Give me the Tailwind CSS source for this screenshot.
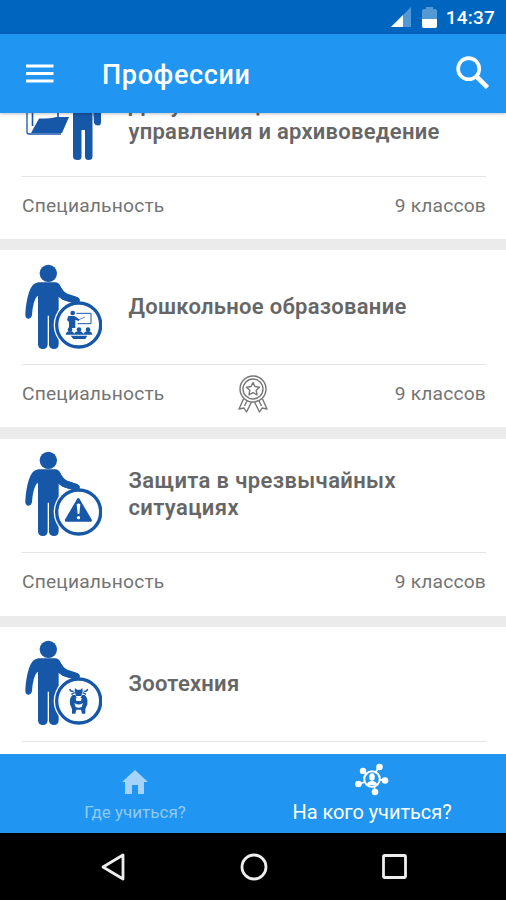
<!DOCTYPE html>
<html lang="ru">
<head>
<meta charset="utf-8">
<title>Профессии</title>
<script src="https://cdn.jsdelivr.net/npm/@tailwindcss/browser@4"></script>
</head>
<body class="w-[506px] h-[900px] overflow-hidden flex flex-col bg-[#ebebeb] font-['Roboto','Noto_Sans',sans-serif]">
<svg class="hidden">
  <defs>
    <g id="person">
      <path d="M85 94H136Q146 94 151 105Q158 121 171 128L203 139Q213 146 208 155Q202 160 190 157L158 146L146 137V280Q146 294 132 294Q119 294 117 283V194H113V280Q113 294 99 294Q84 294 84 280V136H81Q69 150 66 192Q64 203 54 203Q45 201 46 188Q48 151 57 124Q66 96 85 94Z" fill="#1757a8"/>
      <circle cx="206" cy="222" r="75" fill="white"/>
      <circle cx="206" cy="222" r="66" fill="white" stroke="#1757a8" stroke-width="10"/>
      <path d="M150 104Q158 121 171 128L203 139Q213 146 208 155Q202 160 190 157L158 146L146 137Z" fill="#1757a8"/>
      <circle cx="115" cy="67" r="26" fill="#1757a8"/>
    </g>
  </defs>
</svg>

<div class="h-[34px] shrink-0 bg-[#0065be] flex items-center justify-end pr-[11px] text-white">
  <svg class="w-[20px] h-[20px] mr-[11px]" viewBox="0 0 20 20"><path d="M20 0V20H0Z" fill="#5299d6"/><path d="M12 8V20H0Z" fill="white"/></svg>
  <svg class="w-[15px] h-[21px] mr-[9px]" viewBox="0 0 15 21"><path d="M4 0H11V2H13Q15 2 15 4V19Q15 21 13 21H2Q0 21 0 19V4Q0 2 2 2H4Z" fill="#5299d6"/><path d="M0 12H15V19Q15 21 13 21H2Q0 21 0 19Z" fill="white"/></svg>
  <span class="text-[19px] leading-[34px] font-medium pt-[2px] tracking-[0.2px]">14:37</span>
</div>

<header class="h-[79px] shrink-0 bg-[#2095f2] flex items-center pl-[26px] pr-[17px] relative shadow-[0_1px_3px_rgba(0,0,0,0.25)] text-white">
  <svg class="w-[28px] h-[20px]" viewBox="0 0 28 20"><path d="M0 2H27.500M0 9.500H27.500M0 17H27.500" stroke="white" stroke-width="3"/></svg>
  <h1 class="ml-[48px] pt-[3px] text-[27px] leading-[32px] font-medium tracking-[0.650px]">Профессии</h1>
  <svg class="w-[33px] h-[33px] ml-auto -mt-[2px]" viewBox="0 0 33 33" fill="none" stroke="white"><circle cx="12.700" cy="12.700" r="10.600" stroke-width="3.600"/><path d="M20.500 20.500L31.500 31.500" stroke-width="4.600"/></svg>
</header>

<main class="flex-1 min-h-0 overflow-hidden">
  <div class="-mt-[51.500px] flex flex-col gap-[11.500px]">
    <article class="h-[177px] shrink-0 bg-white px-[20px] text-[#666]">
      <div class="h-[115px] pb-[2px] flex items-center border-b border-[#e4e4e4] ml-[2px]">
        <svg class="w-[77px] h-[86px] ml-[3px]" viewBox="0 0 77 86" fill="#1757a8">
          <path d="M48 20H67.500V81.500Q67.500 85 63.500 85Q60 85 60 81.500V55H56.500V81.500Q56.500 85 53 85Q48 85 48 81.500Z"/>
          <path d="M67 20H70Q76 22 76 34V47Q76 50.500 73 50.500Q70 50.500 69 48Z"/>
          <path d="M2 36V57Q2 59 4 59H36" fill="none" stroke="#1757a8" stroke-width="1.300"/>
          <path d="M14 43.500Q26 43.500 31 42H44L37 58H6Z"/>
          <path d="M7.500 36V51M33 36V43" stroke="#1757a8" stroke-width="1.600"/>
        </svg>
        <h2 class="ml-[26.500px] flex-1 font-semibold text-[22px] leading-[27px] tracking-[0.250px] whitespace-nowrap">Документационное обеспечение<br>управления и архивоведение</h2>
      </div>
      <div class="h-[59px] flex items-center justify-between pl-[2px] text-[19.200px] tracking-[0.200px] text-[#747474]"><span>Специальность</span><span>9 классов</span></div>
    </article>

    <article class="h-[177px] shrink-0 bg-white px-[20px] text-[#666]">
      <div class="h-[115px] pb-[1px] flex items-center border-b border-[#e4e4e4] ml-[2px]">
        <svg class="w-[77px] h-[86px] ml-[3px]" viewBox="45 39 231 258">
          <use href="#person"/>
          <g fill="#1757a8">
            <circle cx="188" cy="186" r="7"/><path d="M175 195H193L208 205L206 210L196 206V231H177V213L171 207Z"/>
            <path d="M199 187H243V218H203" fill="none" stroke="#1757a8" stroke-width="3"/><path d="M204 207L225 198" stroke="#1757a8" stroke-width="2"/>
            <circle cx="180" cy="236" r="7"/><circle cx="207" cy="236" r="7"/><circle cx="234" cy="236" r="7"/>
            <path d="M167 251Q169 241 180 241Q190 241 193 248Q196 241 207 241Q217 241 220 248Q224 241 234 241Q245 241 247 251Z"/><path d="M182 254H232L226 264H190Z"/>
          </g>
        </svg>
        <h2 class="ml-[26.500px] flex-1 font-semibold text-[22px] leading-[27px] tracking-[0.280px]">Дошкольное образование</h2>
      </div>
      <div class="h-[58px] flex items-center justify-between pl-[2px] text-[19.200px] tracking-[0.200px] text-[#747474]"><span>Специальность</span>
        <svg class="w-[30px] h-[38px] mr-[54px] -mt-[1px]" viewBox="0 0 30 38" fill="none" stroke="#777" stroke-width="1.400" stroke-linejoin="round"><circle cx="15" cy="14" r="13"/><circle cx="15" cy="14" r="10"/><path d="M15 7.500L17 11.500L21.500 12.200L18.200 15.300L19 19.800L15 17.700L11 19.800L11.800 15.300L8.500 12.200L13 11.500Z"/><path d="M5.500 24L1 34L6 33L8.500 37L13.500 27M24.500 24L29 34L24 33L21.500 37L16.500 27M9 26L6.500 31M21 26L23.500 31"/></svg>
        <span>9 классов</span></div>
    </article>

    <article class="h-[177px] shrink-0 bg-white px-[20px] text-[#666]">
      <div class="h-[114.500px] pb-[2px] flex items-center border-b border-[#e4e4e4] ml-[2px]">
        <svg class="w-[77px] h-[86px] ml-[3px]" viewBox="45 39 231 258">
          <use href="#person"/>
          <path d="M205 185L241 247H169Z" fill="#1757a8" stroke="#1757a8" stroke-width="9" stroke-linejoin="round"/>
          <path d="M200 199Q205 194 211 199L208 228H203Z" fill="white"/><circle cx="205.500" cy="239" r="5" fill="white"/>
        </svg>
        <h2 class="ml-[26.500px] flex-1 font-semibold text-[22px] leading-[27px] tracking-[0.380px]">Защита в чрезвычайных ситуациях</h2>
      </div>
      <div class="h-[59px] flex items-center justify-between pl-[2px] text-[19.200px] tracking-[0.200px] text-[#747474]"><span>Специальность</span><span>9 классов</span></div>
    </article>

    <article class="h-[177px] shrink-0 bg-white px-[20px] text-[#666]">
      <div class="h-[114.500px] pb-[1px] flex items-center border-b border-[#e4e4e4] ml-[2px]">
        <svg class="w-[77px] h-[86px] ml-[3px]" viewBox="45 39 231 258">
          <use href="#person"/>
          <g fill="#1757a8">
            <path d="M195 183L201 188H211L217 183L218 192L214 207H198L194 192Z"/>
            <path d="M179 186Q181 194 191 193M233 186Q231 194 221 193M184 202L194 197M228 202L218 197" fill="none" stroke="#1757a8" stroke-width="4"/>
            <path d="M188 204H196L200 212H212L216 204H224Q235 213 232 232L226 246V260H216L213 248H199L196 260H186V246L180 232Q177 213 188 204Z"/>
            <path d="M197 214Q206 208 215 214L213 222H199Z" fill="white"/><path d="M193 228Q206 237 219 228L215 240Q206 245 197 240Z" fill="white"/>
          </g>
        </svg>
        <h2 class="ml-[26.500px] flex-1 font-semibold text-[22px] leading-[27px] tracking-[0.250px]">Зоотехния</h2>
      </div>
    </article>
  </div>
</main>

<nav class="h-[79px] shrink-0 bg-[#2095f2] flex pl-[17px]">
  <div class="w-[236px] flex flex-col items-center text-[#90caf8]">
    <svg class="w-[26px] h-[24px] mt-[16px]" viewBox="0 0 26 24" fill="#a5d3fa"><path d="M13 0L26 12H22V24H16V15H10V24H3V12H0Z"/></svg>
    <span class="mt-[7px] text-[17px] leading-[22px]">Где учиться?</span>
  </div>
  <div class="w-[238px] flex flex-col items-center text-white">
    <svg class="w-[34px] h-[33px] mt-[9px]" viewBox="0 0 34 33" fill="white" stroke="white"><path d="M8 8L12 12M24 4L20 10M24 17H29M4 21L10 19M19 23L20 28" stroke-width="1.800"/><circle cx="17" cy="16" r="7.800" fill="none" stroke-width="2"/><g stroke="none"><circle cx="8" cy="8" r="3.200"/><circle cx="24.500" cy="4" r="3.300"/><circle cx="30" cy="17.500" r="3.300"/><circle cx="3.500" cy="21" r="3.300"/><circle cx="20" cy="29" r="3.300"/><ellipse cx="17" cy="14" rx="2.800" ry="3.800"/><path d="M12 22Q12 19 15.500 18H18.500Q22 19 22 22Z"/></g></svg>
    <span class="mt-[4px] text-[20px] leading-[24px] tracking-[-0.050px]">На кого учиться?</span>
  </div>
</nav>

<footer class="h-[67px] shrink-0 bg-black flex items-center pl-[101px]">
  <svg class="w-[25px] h-[28px]" viewBox="0 0 25 28" fill="none" stroke="#eee" stroke-width="2.800" stroke-linejoin="round"><path d="M22 2V26L2 14Z"/></svg>
  <svg class="w-[28px] h-[28px] ml-[113.500px]" viewBox="0 0 28 28" fill="none" stroke="#eee" stroke-width="2.800"><circle cx="14" cy="14" r="12"/></svg>
  <svg class="w-[25px] h-[25px] ml-[114.500px]" viewBox="0 0 25 25" fill="none" stroke="#eee" stroke-width="2.800"><rect x="1.500" y="1.500" width="22" height="22" rx="1"/></svg>
</footer>
</body>
</html>
